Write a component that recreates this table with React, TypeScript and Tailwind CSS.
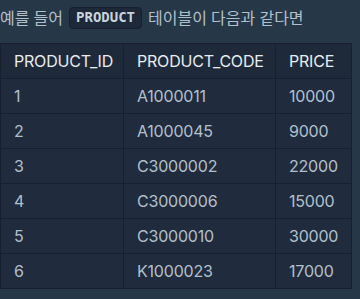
import React from 'react';

const rows = [
  ['1', 'A1000011', '10000'],
  ['2', 'A1000045', '9000'],
  ['3', 'C3000002', '22000'],
  ['4', 'C3000006', '15000'],
  ['5', 'C3000010', '30000'],
  ['6', 'K1000023', '17000'],
];

export default function App() {
  return (
    <div className="w-[360px] h-[299px] overflow-hidden bg-[#263747] pt-[6px] font-['Noto_Sans','Noto_Sans_CJK_KR',sans-serif]">
      <p className="flex items-center h-[23px] text-[16px] text-[#b2c0cc] whitespace-nowrap">
        <span>예를 들어</span>
        <code className="mx-[6px] px-[6px] h-[22px] flex items-center rounded-[4px] bg-[#1d2838] border border-[#172030] text-[14px] font-bold text-[#c9d3dd] font-['DejaVu_Sans_Mono',monospace]">
          PRODUCT
        </code>
        <span>테이블이 다음과 같다면</span>
      </p>
      <table className="mt-[14px] w-[351px] border-collapse table-fixed text-[16px] tracking-[-0.2px] font-['Inter','Noto_Sans',sans-serif]">
        <colgroup>
          <col className="w-[123px]" />
          <col className="w-[152px]" />
          <col className="w-[76px]" />
        </colgroup>
        <thead>
          <tr className="h-[35px] bg-[#1e2939] text-[#e9ecf1]">
            <th className="border border-[#172030] pl-[13px] text-left font-normal">PRODUCT_ID</th>
            <th className="border border-[#172030] pl-[13px] text-left font-normal">PRODUCT_CODE</th>
            <th className="border border-[#172030] pl-[13px] text-left font-normal">PRICE</th>
          </tr>
        </thead>
        <tbody>
          {rows.map((r) => (
            <tr key={r[0]} className="h-[35px] bg-[#202b3d] text-[#b2c0cc]">
              {r.map((c, i) => (
                <td key={i} className="border border-[#172030] pl-[13px]">{c}</td>
              ))}
            </tr>
          ))}
        </tbody>
      </table>
    </div>
  );
}
